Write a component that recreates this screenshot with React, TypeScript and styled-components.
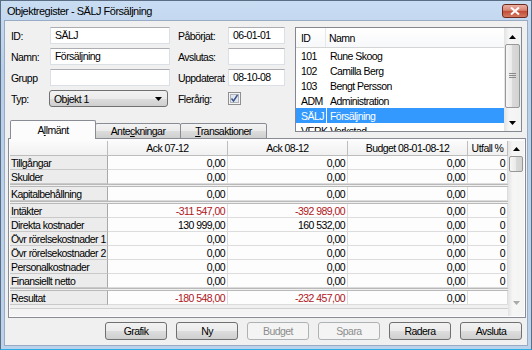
import styled, { createGlobalStyle } from 'styled-components';

const GlobalStyle = createGlobalStyle`
  html, body { margin: 0; padding: 0; background: #fff; }
  body { font-family: "Liberation Sans", Arial, sans-serif; }
`;

const Window = styled.div`
  box-sizing: border-box;
  width: 532px;
  height: 350px;
  display: flex;
  flex-direction: column;
  border: 1px solid #5a6d85;
  border-bottom: 1px solid #2aaee8;
  background: linear-gradient(#c8dcf2, #b9d0ea 20%, #bcd2eb);
  padding: 0 3px 3px;
  font-size: 10.5px;
  letter-spacing: -0.55px;
  color: #000;
`;

const TitleBar = styled.div`
  height: 19px;
  display: flex;
  align-items: flex-start;
  justify-content: space-between;
`;

const Title = styled.span`
  font-size: 11px;
  letter-spacing: -0.5px;
  padding: 4px 0 0 3px;
`;

const CloseBtn = styled.div`
  box-sizing: border-box;
  width: 26px;
  height: 14px;
  margin-top: 3px;
  border: 1px solid #6e2a1d;
  border-radius: 3px;
  background: linear-gradient(#eab0a3, #d88473 45%, #c24a33 50%, #d47a62);
  display: flex;
  align-items: center;
  justify-content: center;
`;

const Body = styled.div`
  flex: 1;
  display: flex;
  flex-direction: column;
  background: #f0f0f0;
  border: 1px solid #97abc4;
  padding: 6px 1px 0 3px;
`;

const TopRow = styled.div`
  display: flex;
  height: 111px;
`;

const LeftCol = styled.div`
  width: 285px;
  padding-left: 2px;
  display: flex;
  flex-direction: column;
  justify-content: space-between;
`;

const Form = styled.div`
  display: grid;
  grid-template-columns: 40px 120px 8px 50px 57px;
  grid-auto-rows: 17px;
  row-gap: 4px;
  align-items: center;
`;

const Label = styled.span<{ $col?: number }>`
  grid-column: ${({ $col }) => $col ?? 1};
  white-space: nowrap;
  padding-left: ${({ $col }) => ($col ? 0 : 1)}px;
`;

const TextBox = styled.div<{ $col?: number }>`
  grid-column: ${({ $col }) => $col ?? 2};
  box-sizing: border-box;
  height: 17px;
  background: #fff;
  border: 1px solid #dbdfe6;
  border-top-color: #abadb3;
  padding: 1px 4px 0;
  line-height: 13px;
  white-space: nowrap;
`;

const Combo = styled.div`
  grid-column: 2;
  box-sizing: border-box;
  height: 17px;
  margin-left: -1px;
  margin-right: 2px;
  border: 1px solid #707070;
  border-radius: 3px;
  background: linear-gradient(#f2f2f2, #ebebeb 50%, #dddddd 50%, #cfcfcf);
  display: flex;
  align-items: center;
  justify-content: space-between;
  padding: 0 5px 0 4px;
`;

const CheckWrap = styled.div`
  grid-column: 5;
  display: flex;
  align-items: center;
`;

const TabStrip = styled.div`
  display: flex;
  align-items: flex-end;
  position: relative;
  z-index: 1;
  margin-bottom: -1px;
`;

const Tab = styled.div<{ $w: number; $active?: boolean }>`
  box-sizing: border-box;
  width: ${({ $w }) => $w}px;
  height: ${({ $active }) => ($active ? 19 : 16)}px;
  margin-left: -1px;
  border: 1px solid #898c95;
  border-bottom: ${({ $active }) => ($active ? 'none' : '1px solid #898c95')};
  border-radius: 2px 2px 0 0;
  background: ${({ $active }) =>
    $active ? '#fcfcfc' : 'linear-gradient(#f3f3f3, #ebebeb 50%, #dddddd 50%, #cfcfcf)'};
  display: flex;
  align-items: ${({ $active }) => ($active ? 'flex-start' : 'center')};
  justify-content: center;
  padding-top: ${({ $active }) => ($active ? 3 : 0)}px;
  &:first-child { margin-left: 0; }
`;

const ListBox = styled.div`
  box-sizing: border-box;
  width: 227px;
  height: 105px;
  margin-left: auto;
  margin-right: 4px;
  border: 1px solid #828790;
  background: #fff;
  display: flex;
`;

const ListBody = styled.div`
  flex: 1;
  overflow: hidden;
`;

const ListHead = styled.div`
  display: grid;
  grid-template-columns: 30px 1fr;
  height: 19px;
  border-bottom: 1px solid #d5d5d5;
  background: linear-gradient(#ffffff, #f7f8fa);
  & > span { display: flex; align-items: center; }
  & > span:first-child { border-right: 1px solid #e3e8ee; padding-left: 5px; }
  & > span:last-child { padding-left: 3px; }
`;

const ListRow = styled.div<{ $sel?: boolean }>`
  display: grid;
  grid-template-columns: 30px 1fr;
  column-gap: 1px;
  height: 15px;
  & > span {
    display: flex;
    align-items: center;
    background: ${({ $sel }) => ($sel ? '#3399ff' : 'transparent')};
    color: ${({ $sel }) => ($sel ? '#fff' : '#000')};
  }
  & > span:first-child { padding-left: 5px; }
  & > span:last-child { padding-left: 3px; }
`;

const Scroll = styled.div<{ $w: number }>`
  width: ${({ $w }) => $w}px;
  display: flex;
  flex-direction: column;
  background: linear-gradient(to right, #e3e3e3, #f6f6f6 30%, #f3f3f3);
`;

const Arrow = styled.div<{ $h: number; $dim?: boolean }>`
  height: ${({ $h }) => $h}px;
  display: flex;
  align-items: center;
  justify-content: center;
  color: ${({ $dim }) => ($dim ? '#a9a9a9' : '#000')};
`;

const Track = styled.div`
  flex: 1;
  display: flex;
  flex-direction: column;
`;

const Thumb = styled.div<{ $top: number; $h: number }>`
  box-sizing: border-box;
  margin: ${({ $top }) => $top}px 1px 0;
  height: ${({ $h }) => $h}px;
  border: 1px solid #989898;
  border-radius: 2px;
  background: linear-gradient(to right, #f6f6f6, #e9e9e9 50%, #d9d9d9 50%, #d3d3d3);
  display: flex;
  align-items: center;
  justify-content: center;
`;

const Panel = styled.div`
  box-sizing: border-box;
  height: 180px;
  border: 1px solid #898c95;
  background: #fcfcfc;
  padding: 2px 1px 1px;
`;

const GridWrap = styled.div`
  height: 175px;
  display: flex;
  background: #f0f0f0;
`;

const Table = styled.div`
  flex: 1;
  display: flex;
  flex-direction: column;
`;

const Row = styled.div<{ $sep?: boolean; $head?: boolean }>`
  display: grid;
  grid-template-columns: 98px 120px 120px 120px 1fr;
  height: ${({ $head }) => ($head ? 15 : 14)}px;
  box-sizing: border-box;
  border-top: ${({ $sep }) => ($sep ? '3px double #b9b9b9' : 'none')};
  height: ${({ $head, $sep }) => ($head ? 15 : $sep ? 17 : 14)}px;
`;

const HeadCell = styled.div`
  border-right: 1px solid #bdbdbd;
  border-bottom: 1px solid #bdbdbd;
  background: linear-gradient(#fbfbfb, #f1f1f1);
  display: flex;
  align-items: center;
  justify-content: center;
  white-space: nowrap;
`;

const RowHead = styled.div`
  border-right: 1px solid #a9a9a9;
  border-bottom: 1px solid #c9c9c9;
  background: #ececec;
  display: flex;
  align-items: center;
  padding-left: 1px;
  white-space: nowrap;
`;

const Cell = styled.div<{ $neg?: boolean }>`
  border-right: 1px solid #dcdcdc;
  border-bottom: 1px solid #dcdcdc;
  background: #fdfdfd;
  display: flex;
  align-items: center;
  justify-content: flex-end;
  padding-right: 2px;
  color: ${({ $neg }) => ($neg ? '#b0161b' : '#000')};
  white-space: nowrap;
`;

const Filler = styled.div`
  flex: 1;
  display: flex;
  align-items: flex-end;
  padding-bottom: 0;
`;

const FillBar = styled.div`
  flex: 1;
  height: 7px;
  border-top: 1px solid #d0d0d0;
  background: #f4f4f4;
`;

const ButtonRow = styled.div`
  display: flex;
  justify-content: flex-end;
  gap: 9px;
  padding: 4px 4px 0 0;
`;

const Button = styled.div<{ $disabled?: boolean }>`
  box-sizing: border-box;
  width: 62px;
  height: 18px;
  border: 1px solid ${({ $disabled }) => ($disabled ? '#adb2b5' : '#707070')};
  border-radius: 3px;
  background: ${({ $disabled }) =>
    $disabled ? '#f4f4f4' : 'linear-gradient(#f2f2f2, #ebebeb 50%, #dddddd 50%, #cfcfcf)'};
  color: ${({ $disabled }) => ($disabled ? '#8d8d8d' : '#000')};
  display: flex;
  align-items: center;
  justify-content: center;
`;

const Tri = ({ down, color = 'currentColor' }: { down?: boolean; color?: string }) => (
  <svg width="7" height="4" viewBox="0 0 7 4">
    <path d={down ? 'M0 0h7L3.5 4z' : 'M0 4h7L3.5 0z'} fill={color} />
  </svg>
);

const Grip = () => (
  <svg width="7" height="6" viewBox="0 0 7 6">
    <path d="M0 0.5h7M0 2.5h7M0 4.5h7" stroke="#8a8a8a" strokeWidth="1" />
  </svg>
);

const listItems = [
  ['101', 'Rune Skoog'],
  ['102', 'Camilla Berg'],
  ['103', 'Bengt Persson'],
  ['ADM', 'Administration'],
  ['SÄLJ', 'Försäljning'],
  ['VERK', 'Verkstad'],
];

const rows: { label: string; sep?: boolean; v: string[] }[] = [
  { label: 'Tillgångar', v: ['0,00', '0,00', '0,00', '0'] },
  { label: 'Skulder', v: ['0,00', '0,00', '0,00', '0'] },
  { label: 'Kapitalbehållning', sep: true, v: ['0,00', '0,00', '0,00', ''] },
  { label: 'Intäkter', sep: true, v: ['-311 547,00', '-392 989,00', '0,00', '0'] },
  { label: 'Direkta kostnader', v: ['130 999,00', '160 532,00', '0,00', '0'] },
  { label: 'Övr rörelsekostnader 1', v: ['0,00', '0,00', '0,00', '0'] },
  { label: 'Övr rörelsekostnader 2', v: ['0,00', '0,00', '0,00', '0'] },
  { label: 'Personalkostnader', v: ['0,00', '0,00', '0,00', '0'] },
  { label: 'Finansiellt netto', v: ['0,00', '0,00', '0,00', '0'] },
  { label: 'Resultat', sep: true, v: ['-180 548,00', '-232 457,00', '0,00', ''] },
];

export default function App() {
  return (
    <>
      <GlobalStyle />
      <Window>
        <TitleBar>
          <Title>Objektregister - SÄLJ Försäljning</Title>
          <CloseBtn>
            <svg width="10" height="8" viewBox="0 0 10 8">
              <path d="M1 0.5L9 7.5M9 0.5L1 7.5" stroke="#fff" strokeWidth="2" />
            </svg>
          </CloseBtn>
        </TitleBar>
        <Body>
          <TopRow>
            <LeftCol>
              <Form>
                <Label>ID:</Label>
                <TextBox>SÄLJ</TextBox>
                <Label $col={4}>Påbörjat:</Label>
                <TextBox $col={5}>06-01-01</TextBox>

                <Label>Namn:</Label>
                <TextBox>Försäljning</TextBox>
                <Label $col={4}>Avslutas:</Label>
                <TextBox $col={5} />

                <Label>Grupp</Label>
                <TextBox />
                <Label $col={4}>Uppdaterat</Label>
                <TextBox $col={5}>08-10-08</TextBox>

                <Label>Typ:</Label>
                <Combo>
                  <span>Objekt 1</span>
                  <Tri down />
                </Combo>
                <Label $col={4}>Flerårig:</Label>
                <CheckWrap>
                  <svg width="13" height="13" viewBox="0 0 13 13">
                    <rect x="0.5" y="0.5" width="12" height="12" fill="#f4f4f4" stroke="#8e8f8f" />
                    <rect x="2.5" y="2.5" width="8" height="8" fill="#dfe6ef" stroke="#aeb3b9" />
                    <path d="M3.5 6.5l2 2.5 4-6" fill="none" stroke="#3a5189" strokeWidth="1.4" />
                  </svg>
                </CheckWrap>
              </Form>
              <TabStrip>
                <Tab $w={86} $active>
                  <span>A<u>l</u>lmänt</span>
                </Tab>
                <Tab $w={86}>
                  <span>Ante<u>c</u>kningar</span>
                </Tab>
                <Tab $w={87}>
                  <span><u>T</u>ransaktioner</span>
                </Tab>
              </TabStrip>
            </LeftCol>
            <ListBox>
              <ListBody>
                <ListHead>
                  <span>ID</span>
                  <span>Namn</span>
                </ListHead>
                {listItems.map(([id, name]) => (
                  <ListRow key={id} $sel={id === 'SÄLJ'}>
                    <span>{id}</span>
                    <span>{name}</span>
                  </ListRow>
                ))}
              </ListBody>
              <Scroll $w={17}>
                <Arrow $h={17}><Tri /></Arrow>
                <Track>
                  <Thumb $top={-1} $h={64}><Grip /></Thumb>
                </Track>
                <Arrow $h={16}><Tri down /></Arrow>
              </Scroll>
            </ListBox>
          </TopRow>
          <Panel>
            <GridWrap>
              <Table>
                <Row $head>
                  <HeadCell />
                  <HeadCell>Ack 07-12</HeadCell>
                  <HeadCell>Ack 08-12</HeadCell>
                  <HeadCell>Budget 08-01-08-12</HeadCell>
                  <HeadCell>Utfall %</HeadCell>
                </Row>
                {rows.map((r) => (
                  <Row key={r.label} $sep={r.sep}>
                    <RowHead>{r.label}</RowHead>
                    {r.v.map((v, i) => (
                      <Cell key={i} $neg={v.startsWith('-')}>{v}</Cell>
                    ))}
                  </Row>
                ))}
                <Filler>
                  <FillBar />
                </Filler>
              </Table>
              <Scroll $w={16}>
                <Arrow $h={15}><Tri /></Arrow>
                <Track>
                  <Thumb $top={0} $h={16} />
                </Track>
                <Arrow $h={14} $dim><Tri down /></Arrow>
                <Arrow $h={6} />
              </Scroll>
            </GridWrap>
          </Panel>
          <ButtonRow>
            <Button>Grafik</Button>
            <Button>Ny</Button>
            <Button $disabled>Budget</Button>
            <Button $disabled>Spara</Button>
            <Button>Radera</Button>
            <Button>Avsluta</Button>
          </ButtonRow>
        </Body>
      </Window>
    </>
  );
}
